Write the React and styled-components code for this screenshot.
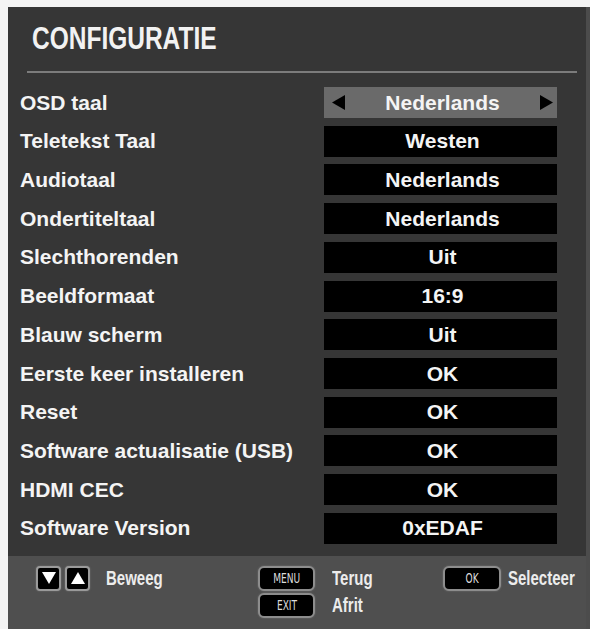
import React from 'react';
import styled, { createGlobalStyle } from 'styled-components';

const GlobalStyle = createGlobalStyle`
  html, body {
    margin: 0;
    padding: 0;
    background: #f4f4f4;
  }
  body {
    font-family: 'Liberation Sans', Arial, sans-serif;
  }
`;

const Screen = styled.div`
  width: 590px;
  height: 629px;
  padding: 7px 0 0 8px;
  box-sizing: border-box;
  overflow: hidden;
`;

const Panel = styled.div`
  width: 582px;
  height: 622px;
  background: #363636;
  border-right: 4px solid #4c4c4c;
  box-sizing: border-box;
  display: flex;
  flex-direction: column;
`;

const Header = styled.div`
  height: 66px;
  border-bottom: 2px solid #7c7c7c;
  margin: 0 9px 0 19px;
  display: flex;
  align-items: center;
  box-sizing: border-box;
`;

const Title = styled.h1`
  margin: 0 0 0 5px;
  color: #f2f2f2;
  font-size: 31px;
  font-weight: bold;
  display: inline-block;
  transform: scaleX(0.79);
  transform-origin: left center;
`;

const List = styled.div`
  padding: 14px 0 0 12px;
  display: flex;
  flex-direction: column;
  gap: 7.73px;
`;

const Row = styled.div`
  display: grid;
  grid-template-columns: 304px 233px;
  align-items: center;
  height: 31px;
`;

const Label = styled.span`
  color: #f4f4f4;
  font-size: 21px;
  font-weight: bold;
  white-space: nowrap;
`;

const Value = styled.div`
  height: 31px;
  background: ${p => (p.$selected ? '#6a6a6a' : '#000')};
  color: #f4f4f4;
  font-size: 21px;
  font-weight: bold;
  display: flex;
  align-items: center;
  justify-content: space-between;
  padding: 0 3px 0 7px;
  box-sizing: border-box;
`;

const ValueText = styled.span`
  flex: 1;
  text-align: center;
`;

const Arrow = styled.svg`
  width: 15px;
  height: 17px;
  flex: none;
  visibility: ${p => (p.$hidden ? 'hidden' : 'visible')};
`;

const Footer = styled.div`
  margin-top: 12px;
  flex: 1;
  background: #4f4f4f;
  display: flex;
  padding: 10px 0 0 28px;
  box-sizing: border-box;
`;

const Group = styled.div`
  width: ${p => p.$width}px;
  flex: none;
  display: flex;
  align-items: ${p => (p.$stack ? 'flex-start' : 'center')};
  align-self: flex-start;
  height: 25px;
`;

const NavKeys = styled.div`
  display: flex;
  gap: 4px;
  margin-right: 16px;
`;

const NavKey = styled.div`
  width: 25px;
  height: 25px;
  background: #000;
  border: 2px solid #9a9a9a;
  border-radius: 4px;
  box-sizing: border-box;
  display: flex;
  align-items: center;
  justify-content: center;
  box-shadow: 0 0 2px #777;
`;

const KeyColumn = styled.div`
  display: grid;
  grid-template-columns: 57px auto;
  column-gap: 17px;
  row-gap: 2px;
  align-items: center;
`;

const Key = styled.div`
  width: ${p => p.$width || 57}px;
  height: 25px;
  flex: none;
  background: #000;
  border: 2px solid #8d8d8d;
  border-radius: 6px;
  box-sizing: border-box;
  display: flex;
  align-items: center;
  justify-content: center;
  color: #dcdcdc;
  font-family: 'DejaVu Sans Condensed', 'Liberation Sans Narrow', sans-serif;
  font-size: 14px;
  box-shadow: 0 0 2px #777;
`;

const KeyText = styled.span`
  display: inline-block;
  transform: scaleX(0.72);
`;

const Hint = styled.span`
  color: #ececec;
  font-size: 20px;
  font-weight: bold;
  display: inline-block;
  transform: scaleX(0.75);
  transform-origin: left center;
  white-space: nowrap;
  margin-left: ${p => p.$gap || 0}px;
`;

const items = [
  ['OSD taal', 'Nederlands', true],
  ['Teletekst Taal', 'Westen'],
  ['Audiotaal', 'Nederlands'],
  ['Ondertiteltaal', 'Nederlands'],
  ['Slechthorenden', 'Uit'],
  ['Beeldformaat', '16:9'],
  ['Blauw scherm', 'Uit'],
  ['Eerste keer installeren', 'OK'],
  ['Reset', 'OK'],
  ['Software actualisatie (USB)', 'OK'],
  ['HDMI CEC', 'OK'],
  ['Software Version', '0xEDAF'],
];

const Triangle = ({ dir, color }) => {
  const pts = {
    left: '1,8.5 14,1 14,16',
    right: '14,8.5 1,1 1,16',
    up: '8,2 15,14 1,14',
    down: '1,2 15,2 8,14',
  }[dir];
  const small = dir === 'up' || dir === 'down';
  return small ? (
    <svg width="16" height="16" viewBox="0 0 16 16">
      <polygon points={pts} fill={color} />
    </svg>
  ) : (
    <Arrow viewBox="0 0 15 17">
      <polygon points={pts} fill={color} />
    </Arrow>
  );
};

export default function App() {
  return (
    <>
      <GlobalStyle />
      <Screen>
        <Panel>
          <Header>
            <Title>CONFIGURATIE</Title>
          </Header>
          <List>
            {items.map(([label, value, selected]) => (
              <Row key={label}>
                <Label>{label}</Label>
                <Value $selected={selected}>
                  {selected ? <Triangle dir="left" color="#000" /> : <Arrow $hidden />}
                  <ValueText>{value}</ValueText>
                  {selected ? <Triangle dir="right" color="#000" /> : <Arrow $hidden />}
                </Value>
              </Row>
            ))}
          </List>
          <Footer>
            <Group $width={222}>
              <NavKeys>
                <NavKey><Triangle dir="down" color="#fff" /></NavKey>
                <NavKey><Triangle dir="up" color="#fff" /></NavKey>
              </NavKeys>
              <Hint>Beweeg</Hint>
            </Group>
            <Group $width={185} $stack>
              <KeyColumn>
                <Key><KeyText>MENU</KeyText></Key>
                <Hint>Terug</Hint>
                <Key><KeyText>EXIT</KeyText></Key>
                <Hint>Afrit</Hint>
              </KeyColumn>
            </Group>
            <Group $width={140}>
              <Key $width={58}><KeyText>OK</KeyText></Key>
              <Hint $gap={7}>Selecteer</Hint>
            </Group>
          </Footer>
        </Panel>
      </Screen>
    </>
  );
}
